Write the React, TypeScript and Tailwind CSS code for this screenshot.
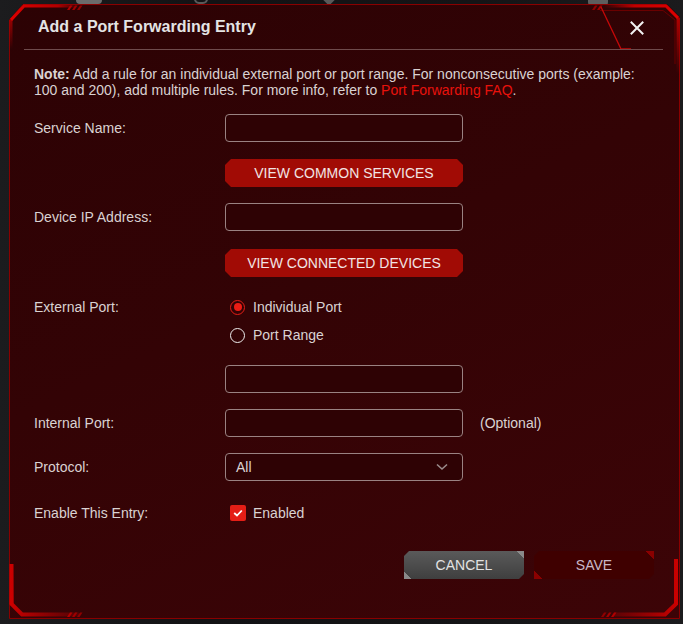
import React from "react";

function Input({ className = "" }: { className?: string }) {
  return (
    <input
      className={
        "w-[238px] h-[28px] rounded-[4px] border border-[#9a8282] bg-[#2e0204] px-[10px] text-[14px] text-[#ddd] outline-none " +
        className
      }
    />
  );
}

function RedButton({ children }: { children: React.ReactNode }) {
  return (
    <button className="w-[238px] h-[28px] bg-[#a10b05] text-[14px] text-[#f1e4e4] [clip-path:polygon(6px_0,calc(100%_-_6px)_0,100%_6px,100%_calc(100%_-_6px),calc(100%_-_6px)_100%,6px_100%,0_calc(100%_-_6px),0_6px)]">
      {children}
    </button>
  );
}

function Decor() {
  return (
    <svg
      className="absolute inset-0 pointer-events-none"
      width="671"
      height="615"
      viewBox="0 0 671 615"
    >
      <defs>
        <linearGradient id="tl" gradientUnits="userSpaceOnUse" x1="0" y1="0" x2="70" y2="0">
          <stop offset="0" stopColor="#e00000" />
          <stop offset="0.7" stopColor="#b00000" />
          <stop offset="1" stopColor="#b00000" stopOpacity="0" />
        </linearGradient>
        <linearGradient id="tlv" gradientUnits="userSpaceOnUse" x1="0" y1="0" x2="0" y2="45">
          <stop offset="0" stopColor="#d00000" />
          <stop offset="1" stopColor="#d00000" stopOpacity="0" />
        </linearGradient>
        <linearGradient id="tr" gradientUnits="userSpaceOnUse" x1="595" y1="0" x2="671" y2="0">
          <stop offset="0" stopColor="#b00000" stopOpacity="0" />
          <stop offset="0.4" stopColor="#c00000" />
          <stop offset="1" stopColor="#e00000" />
        </linearGradient>
        <linearGradient id="trv" gradientUnits="userSpaceOnUse" x1="0" y1="0" x2="0" y2="70">
          <stop offset="0" stopColor="#d00000" />
          <stop offset="1" stopColor="#d00000" stopOpacity="0" />
        </linearGradient>
        <linearGradient id="bl" gradientUnits="userSpaceOnUse" x1="0" y1="0" x2="70" y2="0">
          <stop offset="0" stopColor="#d00000" />
          <stop offset="1" stopColor="#c00000" stopOpacity="0.2" />
        </linearGradient>
        <linearGradient id="blv" gradientUnits="userSpaceOnUse" x1="0" y1="560" x2="0" y2="610">
          <stop offset="0" stopColor="#c00000" stopOpacity="0" />
          <stop offset="1" stopColor="#d00000" />
        </linearGradient>
        <linearGradient id="br" gradientUnits="userSpaceOnUse" x1="600" y1="0" x2="671" y2="0">
          <stop offset="0" stopColor="#c00000" stopOpacity="0.2" />
          <stop offset="1" stopColor="#d00000" />
        </linearGradient>
        <linearGradient id="brv" gradientUnits="userSpaceOnUse" x1="0" y1="555" x2="0" y2="610">
          <stop offset="0" stopColor="#c00000" stopOpacity="0" />
          <stop offset="1" stopColor="#d00000" />
        </linearGradient>
      </defs>
      {/* thin outer frame */}
      <path
        d="M0.5 16 L14 0.5 L657 0.5 L670.5 14 L670.5 614.5 L0.5 614.5 Z"
        fill="none"
        stroke="#8a0000"
        strokeWidth="1"
      />
      {/* top-left glow */}
      <path d="M2 16 L15 2 L70 2" fill="none" stroke="url(#tl)" strokeWidth="3" />
      <path d="M2 45 L2 16" fill="none" stroke="url(#tlv)" strokeWidth="3" />
      <path d="M58 6 L61 1.5 L63.5 1.5 L60.5 6 Z" fill="#b00000" />
      <path d="M63 6 L66 1.5 L68.5 1.5 L65.5 6 Z" fill="#a00000" />
      <path d="M68 6 L71 1.5 L73.5 1.5 L70.5 6 Z" fill="#900000" />
      {/* top-right glow */}
      <path d="M595 2 L657 2 L669 14" fill="none" stroke="url(#tr)" strokeWidth="3" />
      <path d="M669 14 L669 70" fill="none" stroke="url(#trv)" strokeWidth="3" />
      <path d="M591 6.5 L654 6.5 L666 16 L666 60" fill="none" stroke="#6a0000" strokeWidth="1" />
      <path d="M583 6 L586 1.5 L588.5 1.5 L585.5 6 Z" fill="#900000" />
      <path d="M588 6 L591 1.5 L593.5 1.5 L590.5 6 Z" fill="#a00000" />
      {/* close tab */}
      <path d="M592 3 L612 45 L622 45" fill="none" stroke="#c40808" strokeWidth="1.3" />
      {/* bottom-left glow */}
      <path d="M2.5 560 L2.5 600 L13 610.5 L70 610.5" fill="none" stroke="url(#bl)" strokeWidth="4" />
      <path d="M2.5 560 L2.5 600" fill="none" stroke="url(#blv)" strokeWidth="4" />
      <path d="M58 613 L61 608.5 L63.5 608.5 L60.5 613 Z" fill="#b00000" />
      <path d="M63 613 L66 608.5 L68.5 608.5 L65.5 613 Z" fill="#a00000" />
      <path d="M68 613 L71 608.5 L73.5 608.5 L70.5 613 Z" fill="#900000" />
      {/* bottom-right glow */}
      <path d="M605 610.5 L656 610.5 L667 600 L667 555" fill="none" stroke="url(#br)" strokeWidth="4" />
      <path d="M667 600 L667 555" fill="none" stroke="url(#brv)" strokeWidth="4" />
      <path d="M592 613 L595 608.5 L597.5 608.5 L594.5 613 Z" fill="#900000" />
      <path d="M597 613 L600 608.5 L602.5 608.5 L599.5 613 Z" fill="#a00000" />
      <path d="M602 613 L605 608.5 L607.5 608.5 L604.5 613 Z" fill="#b00000" />
    </svg>
  );
}

export default function App() {
  return (
    <div className="relative w-[683px] h-[624px] overflow-hidden bg-[linear-gradient(90deg,#1c1c1e,#121214_30%,#141416_70%,#1b1b1d)] pt-[4px] pl-[9px] font-['Liberation_Sans',Arial,sans-serif]">
      {/* page icons peeking behind the dialog */}
      <div className="absolute left-[76px] top-[-6px] w-[26px] h-[10px] rounded-[4px] bg-[#6b6b6b]" />
      <div className="absolute left-[194px] top-[-6px] w-[14px] h-[10px] rounded-full border-2 border-[#5a5a5a]" />
      <div className="absolute left-[325px] top-[-4px] w-[8px] h-[8px] rotate-45 bg-[#5a5a5a]" />
      <div className="absolute left-[588px] top-[-6px] w-[20px] h-[12px] rounded-[4px] bg-[#5e5e5e]" />

      <div className="relative w-[671px] h-[615px]">
        <div className="absolute inset-0 bg-[linear-gradient(155deg,#2c0204_0%,#330305_45%,#3c0407_100%)] [clip-path:polygon(14px_0,calc(100%_-_13px)_0,100%_13px,100%_100%,0_100%,0_16px)]" />
        <Decor />

        <div className="relative flex flex-col">
          {/* header */}
          <div className="h-[45px] flex items-center justify-between pl-[29px] pr-[36px]">
            <h1 className="text-[16px] font-bold text-[#e4e4e4] leading-none">
              Add a Port Forwarding Entry
            </h1>
            <svg width="14" height="14" viewBox="0 0 14 14" className="mt-[2px]">
              <path d="M1.5 1.5 L12.5 12.5 M12.5 1.5 L1.5 12.5" stroke="#f2f2f2" strokeWidth="2" strokeLinecap="square" />
            </svg>
          </div>
          <div className="ml-[15px] w-[639px] h-px bg-[#6f4b4c]" />

          {/* body */}
          <div className="pl-[25px] text-[14px] text-[#dad2d2]">
            <p className="mt-[16px] w-[612px] leading-[16px]">
              <span className="font-bold">Note:</span> Add a rule for an individual external port or port
              range. For nonconsecutive ports (example: 100 and 200), add multiple rules. For more info,
              refer to <span className="text-[#e8120c]">Port Forwarding FAQ</span>.
            </p>

            <div className="mt-[16px] flex items-center h-[28px]">
              <div className="w-[191px]">Service Name:</div>
              <Input />
            </div>

            <div className="mt-[17px] flex h-[28px]">
              <div className="w-[191px]" />
              <RedButton>VIEW COMMON SERVICES</RedButton>
            </div>

            <div className="mt-[16px] flex items-center h-[28px]">
              <div className="w-[191px]">Device IP Address:</div>
              <Input />
            </div>

            <div className="mt-[18px] flex h-[28px]">
              <div className="w-[191px]" />
              <RedButton>VIEW CONNECTED DEVICES</RedButton>
            </div>

            <div className="mt-[16px] flex">
              <div className="w-[191px] h-[28px] flex items-center">External Port:</div>
              <div className="flex flex-col">
                <div className="h-[28px] flex items-center pl-[5px]">
                  <span className="w-[15px] h-[15px] rounded-full border-[1.5px] border-[#e41e16] flex items-center justify-center">
                    <span className="w-[8px] h-[8px] rounded-full bg-[#ec1c14]" />
                  </span>
                  <span className="ml-[8px]">Individual Port</span>
                </div>
                <div className="h-[28px] flex items-center pl-[5px]">
                  <span className="w-[15px] h-[15px] rounded-full border-[1.5px] border-[#eeeeee]" />
                  <span className="ml-[8px]">Port Range</span>
                </div>
              </div>
            </div>

            <div className="mt-[16px] flex h-[28px]">
              <div className="w-[191px]" />
              <Input />
            </div>

            <div className="mt-[16px] flex items-center h-[28px]">
              <div className="w-[191px]">Internal Port:</div>
              <Input />
              <span className="ml-[17px]">(Optional)</span>
            </div>

            <div className="mt-[16px] flex items-center h-[28px]">
              <div className="w-[191px]">Protocol:</div>
              <div className="w-[238px] h-[28px] rounded-[4px] border border-[#9a8282] bg-[#2e0204] flex items-center justify-between pl-[10px] pr-[14px]">
                <span>All</span>
                <svg width="12" height="8" viewBox="0 0 12 8">
                  <path d="M1 1.5 L6 6 L11 1.5" fill="none" stroke="#9a8c8c" strokeWidth="1.6" />
                </svg>
              </div>
            </div>

            <div className="mt-[18px] flex items-center h-[28px]">
              <div className="w-[191px]">Enable This Entry:</div>
              <div className="flex items-center pl-[5px]">
                <span className="w-[16px] h-[16px] rounded-[2px] bg-[#e41e16] flex items-center justify-center">
                  <svg width="10" height="8" viewBox="0 0 10 8">
                    <path d="M1.2 4 L4 6.5 L8.8 1.5" fill="none" stroke="#ffffff" strokeWidth="1.8" />
                  </svg>
                </span>
                <span className="ml-[7px]">Enabled</span>
              </div>
            </div>
          </div>

          {/* footer */}
          <div className="mt-[24px] flex justify-end gap-[10px] pr-[26px]">
            <button className="relative w-[120px] h-[28px] bg-[linear-gradient(180deg,#5a5a5a,#3f3f3f)] text-[14px] text-[#e2e2e2] [clip-path:polygon(5px_0,100%_0,100%_calc(100%_-_5px),calc(100%_-_5px)_100%,0_100%,0_5px)]">
              <span className="absolute right-0 top-0 w-[8px] h-[8px] bg-[linear-gradient(225deg,#8a8a8a_50%,transparent_50%)]" />
              <span className="absolute left-0 bottom-0 w-[8px] h-[8px] bg-[linear-gradient(45deg,#8a8a8a_50%,transparent_50%)]" />
              CANCEL
            </button>
            <button className="relative w-[120px] h-[28px] bg-[#3f0000] text-[14px] text-[#c9b8c8] [clip-path:polygon(5px_0,100%_0,100%_calc(100%_-_5px),calc(100%_-_5px)_100%,0_100%,0_5px)]">
              <span className="absolute right-0 top-0 w-[8px] h-[8px] bg-[linear-gradient(225deg,#8a0000_50%,transparent_50%)]" />
              <span className="absolute left-0 bottom-0 w-[8px] h-[8px] bg-[linear-gradient(45deg,#8a0000_50%,transparent_50%)]" />
              SAVE
            </button>
          </div>
        </div>
      </div>
    </div>
  );
}
